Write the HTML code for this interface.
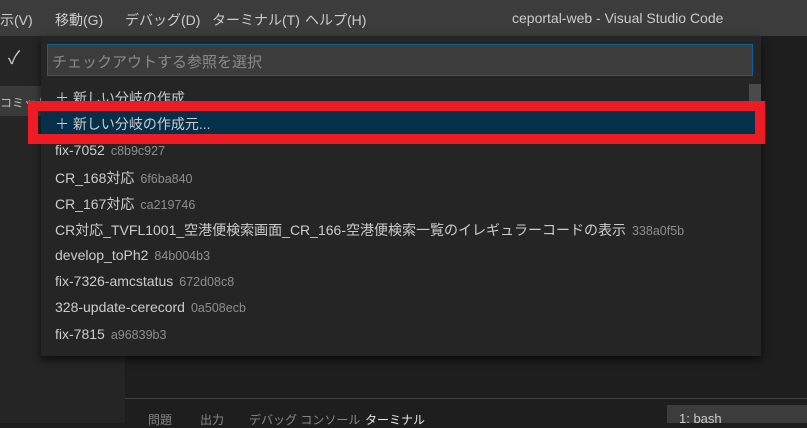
<!DOCTYPE html>
<html><head><meta charset="utf-8"><style>
*{margin:0;padding:0;box-sizing:border-box}
body{width:807px;height:423px;overflow:hidden;background:#1e1e1e;font-family:"Liberation Sans","Noto Sans CJK JP",sans-serif;position:relative;color:#ccc}
.abs{position:absolute}
.title{left:0;top:0;width:807px;height:36px;background:#3c3c3c;font-size:14px;color:#ccc}
.title span{position:absolute;top:10px}
.side{left:0;top:36px;width:125px;height:387px;background:#252526}
.qp{left:41px;top:36px;width:720px;height:320px;background:#252526;box-shadow:0 4px 8px rgba(0,0,0,.6)}
.inp{left:47px;top:44px;width:706px;height:32px;background:#3c3c3c;border:1px solid #0e639c;font-size:15px;color:#8a8a8a;padding:6px 0 0 4px}
.row{position:absolute;left:55px;font-size:14px;color:#ccc;white-space:nowrap}
.row i{font-style:normal;font-size:12.5px;color:#8e8e8e;margin-left:6px}
.sel{left:41px;top:111px;width:714px;height:22px;background:#062f4a}
.red{left:28px;top:101px;width:737px;height:43px;border:10px solid #ed1c24}
.panel{left:125px;top:398px;width:682px;height:25px;border-top:1px solid #444;font-size:12px;color:#888;white-space:nowrap}
</style></head><body>
<div class="abs title"><span style="left:0">示(V)</span><span style="left:55px">移動(G)</span><span style="left:125px">デバッグ(D)</span><span style="left:212px">ターミナル(T)</span><span style="left:305px">ヘルプ(H)</span><span style="left:512px">ceportal-web - Visual Studio Code</span></div>
<div class="abs side"></div>
<div class="abs" style="left:8px;top:44px;font-size:18px;color:#ccc">✓</div>
<div class="abs" style="left:0;top:86px;width:41px;height:30px;background:#3a3a3a;font-size:12px;color:#bbb;padding-top:8px;white-space:nowrap;overflow:hidden">コミット</div>
<div class="abs panel"><span class="abs" style="left:23px;top:12px">問題</span><span class="abs" style="left:75px;top:12px">出力</span><span class="abs" style="left:124px;top:12px">デバッグ コンソール</span><span class="abs" style="left:240px;top:12px;color:#e7e7e7">ターミナル</span></div>
<div class="abs" style="left:667px;top:405px;width:140px;height:18px;background:#3c3c3c;font-size:13px;color:#ccc;padding:6px 0 0 12px">1: bash</div>
<div class="abs qp"></div>
<div class="abs inp">チェックアウトする参照を選択</div>
<div class="abs" style="left:749px;top:84px;width:12px;height:20px;background:#4a4a4a"></div>
<div class="abs sel"></div>
<div class="row" style="top:88px">＋ 新しい分岐の作成</div>
<div class="row" style="top:114px">＋ 新しい分岐の作成元...</div>
<div class="row" style="top:142px">fix-7052<i>c8b9c927</i></div>
<div class="row" style="top:168px">CR_168対応<i>6f6ba840</i></div>
<div class="row" style="top:194px">CR_167対応<i>ca219746</i></div>
<div class="row" style="top:220px">CR対応_TVFL1001_空港便検索画面_CR_166-空港便検索一覧のイレギュラーコードの表示<i>338a0f5b</i></div>
<div class="row" style="top:247px">develop_toPh2<i>84b004b3</i></div>
<div class="row" style="top:273px">fix-7326-amcstatus<i>672d08c8</i></div>
<div class="row" style="top:299px">328-update-cerecord<i>0a508ecb</i></div>
<div class="row" style="top:326px">fix-7815<i>a96839b3</i></div>
<div class="abs red"></div>
</body></html>
